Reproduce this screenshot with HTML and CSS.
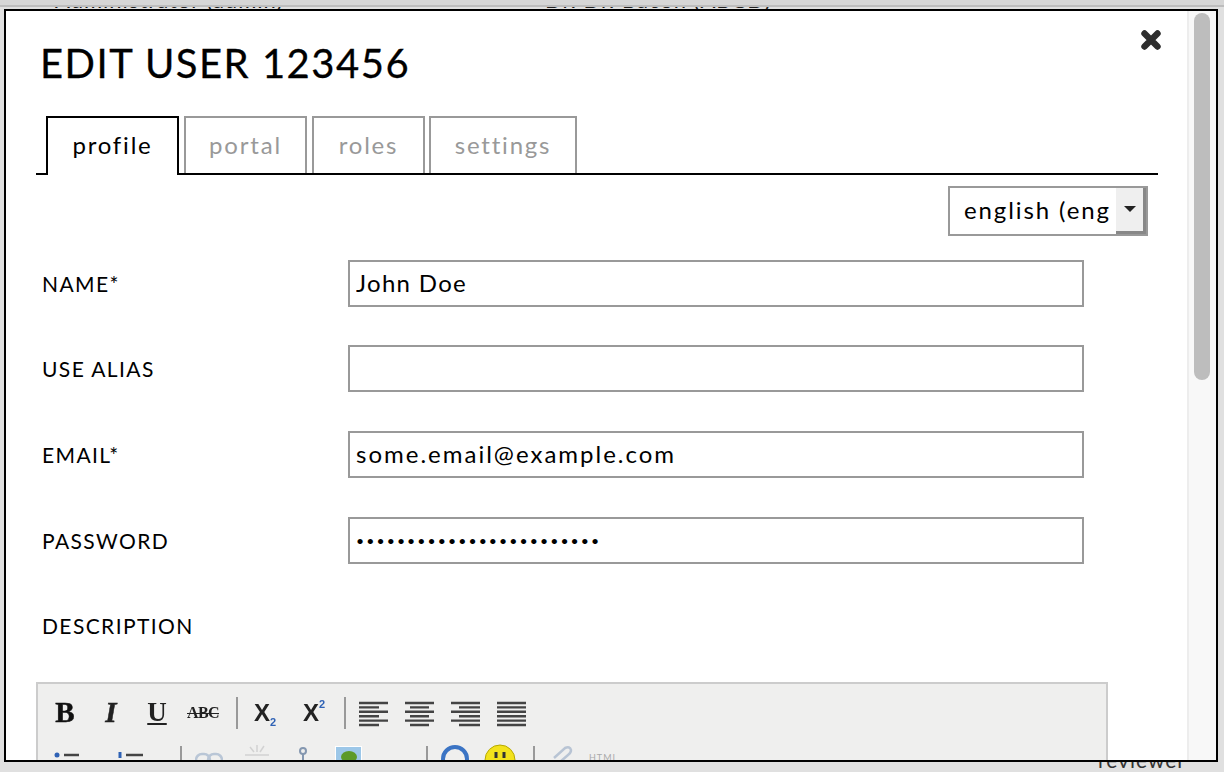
FILE: index.html
```html
<!DOCTYPE html>
<html lang="en">
<head>
<meta charset="utf-8">
<title>Edit user</title>
<link rel="stylesheet" href="styles.css">
</head>
<body>
<div class="backdrop">
  <div class="bg-strip"></div>
  <div class="bg-top"><span class="bg-a">Administrator (admin)</span><span class="bg-b">Dr. Dr. Bacon (ABCD)</span></div>
  <div class="bg-reviewer">reviewer</div>
</div>
<div class="modal">
  <main class="pane">
    <svg class="close" viewBox="0 0 20 20" width="20" height="20"><path d="M3.5 3.5 16.5 16.5M16.5 3.5 3.5 16.5" fill="none" stroke="#2e2e2e" stroke-width="6.4" stroke-linecap="round"/></svg>
    <h1 class="title">EDIT USER 123456</h1>
    <nav class="tabs">
      <a class="tab tab-active">profile</a>
      <a class="tab t-portal">portal</a>
      <a class="tab t-roles">roles</a>
      <a class="tab t-settings">settings</a>
    </nav>
    <div class="lang-row">
      <div class="lang"><span class="lang-text">english (eng</span><span class="lang-btn"><i class="arrow"></i></span></div>
    </div>
    <form class="form">
      <label class="lbl">NAME*</label><input class="inp inp-name" type="text" value="John Doe">
      <label class="lbl">USE ALIAS</label><input class="inp" type="text" value="">
      <label class="lbl">EMAIL*</label><input class="inp" type="text" value="some.email@example.com">
      <label class="lbl">PASSWORD</label><input class="inp inp-pw" type="password" value="xxxxxxxxxxxxxxxxxxxxxxxx">
      <label class="lbl lbl-desc">DESCRIPTION</label>
    </form>
    <div class="editor">
      <div class="tb-row">
        <span class="btn ic-b">B</span>
        <span class="btn ic-i">I</span>
        <span class="btn ic-u">U</span>
        <span class="btn ic-s">ABC</span>
        <span class="sep s1"></span>
        <span class="btn ic-x"><span>X<sub class="blue blue-sub">2</sub></span></span>
        <span class="btn ic-x ic-sup"><span>X<sup class="blue blue-sup">2</sup></span></span>
        <span class="sep s2"></span>
        <span class="btn"><svg class="al" width="30" height="24" viewBox="0 0 30 24"><path d="M1 2h29M1 6.4h20M1 10.8h29M1 15.2h20M1 19.6h29M1 24h20"/></svg></span>
        <span class="btn"><svg class="al" width="30" height="24" viewBox="0 0 30 24"><path d="M1 2h29M6 6.4h19M1 10.8h29M6 15.2h19M1 19.6h29M6 24h19"/></svg></span>
        <span class="btn"><svg class="al" width="30" height="24" viewBox="0 0 30 24"><path d="M1 2h29M9 6.4h21M1 10.8h29M9 15.2h21M1 19.6h29M9 24h21"/></svg></span>
        <span class="btn"><svg class="al" width="30" height="24" viewBox="0 0 30 24"><path d="M1 2h29M1 6.4h29M1 10.8h29M1 15.2h29M1 19.6h29M1 24h29"/></svg></span>
      </div>
      <div class="tb-row tb-row2">
        <svg class="i2 m1" width="26" height="20" viewBox="0 0 26 20"><circle cx="3" cy="3" r="2.5" fill="#2f62b5"/><path d="M10 3h15" stroke="#444" stroke-width="2.5"/></svg>
        <svg class="i2 m2" width="28" height="20" viewBox="0 0 28 20"><path d="M4 0v6" stroke="#2f62b5" stroke-width="3"/><path d="M10 3h17" stroke="#444" stroke-width="2.5"/></svg>
        <span class="sep2 s3"></span>
        <svg class="i2 m3" width="28" height="20" viewBox="0 0 28 20"><rect x="1" y="4" width="14" height="12" rx="6" fill="none" stroke="#b9c6d6" stroke-width="2.5"/><rect x="13" y="4" width="14" height="12" rx="6" fill="none" stroke="#b9c6d6" stroke-width="2.5"/></svg>
        <svg class="i2 m4" width="26" height="20" viewBox="0 0 26 20"><path d="M13 0v7M6 2l4 5M20 1l-4 6M1 10h24M4 16h18" stroke="#d2d2d2" stroke-width="1.5"/></svg>
        <svg class="i2 m5" width="14" height="20" viewBox="0 0 14 20"><circle cx="7" cy="5" r="3" fill="none" stroke="#8497b0" stroke-width="2"/><path d="M7 8v10" stroke="#8497b0" stroke-width="2"/></svg>
        <svg class="i2 m6" width="27" height="20" viewBox="0 0 27 20"><rect width="27" height="20" fill="#fff"/><rect x="1" y="1" width="25" height="18" fill="#9cc7e8"/><ellipse cx="14" cy="11" rx="8" ry="6" fill="#5c9a28"/></svg>
        <span class="sep2 s4"></span>
        <svg class="i2 m7" width="30" height="20" viewBox="0 0 30 20"><circle cx="15" cy="15" r="12" fill="none" stroke="#3b74c4" stroke-width="4"/></svg>
        <svg class="i2 m8" width="32" height="20" viewBox="0 0 32 20"><circle cx="16" cy="16" r="15" fill="#f3e21c" stroke="#b5a800"/><path d="M12 8v6M20 8v6" stroke="#333" stroke-width="3"/></svg>
        <span class="sep2 s5"></span>
        <svg class="i2 m9" width="22" height="20" viewBox="0 0 22 20"><path d="M3 14 14 4q5-2 6 2 0 3-3 5L9 18" fill="none" stroke="#b8c4d4" stroke-width="2.5"/></svg>
        <span class="html-mini">HTML</span>
      </div>
    </div>
  </main>
  <aside class="scroll"><div class="thumb"></div></aside>
</div>
</body>
</html>
```
FILE: styles.css
```css
* { box-sizing: border-box; }
html, body { margin: 0; height: 100%; }
body {
  overflow: hidden;
  background: #e0e0e0;
  font-family: Lato, "Open Sans", sans-serif;
  color: #000;
}
.backdrop { height: 772px; }
.bg-strip {
  height: 7px;
  background: #d6d6d6;
  border-bottom: 2px solid #bdbdbd;
}
.bg-top {
  height: 10px;
  overflow: hidden;
  font-size: 22px;
  letter-spacing: 1px;
  line-height: 1;
  display: flex;
  color: #222;
}
.bg-a, .bg-b { display: block; margin-top: -18px; white-space: nowrap; }
.bg-a { margin-left: 55px; width: 490px; }
.bg-reviewer {
  position: absolute;
  left: 1098px;
  top: 747px;
  font-size: 21px;
  letter-spacing: 1px;
  color: #333;
}
.modal {
  position: absolute;
  left: 4px;
  top: 9px;
  width: 1214px;
  height: 753px;
  border: 2px solid #000;
  background: #fff;
  display: flex;
}
.pane {
  flex: 1;
  position: relative;
  overflow: hidden;
  padding: 0 29px 0 30px;
}
.close { position: absolute; right: 26px; top: 19px; }
.title {
  margin: 0;
  height: 105px;
  padding: 29px 0 0 4px;
  font-size: 40px;
  line-height: 46px;
  font-weight: 400;
  letter-spacing: 1.5px;
  -webkit-text-stroke: .3px #000;
  white-space: nowrap;
}
.tabs {
  display: flex;
  height: 59px;
  padding-left: 10px;
  border-bottom: 2px solid #000;
}
.tab {
  display: block;
  height: 57px;
  margin-right: 5px;
  border: 2px solid #999;
  border-bottom: 0;
  color: #999;
  font-size: 24px;
  letter-spacing: 1.8px;
  line-height: 53px;
  text-align: center;
}
.tab-active {
  width: 133px;
  height: 59px;
  border-color: #000;
  border-bottom: 0;
  background: #fff;
  color: #000;
  margin-right: 5px;
  position: relative;
  z-index: 1;
}
.t-portal { width: 123px; }
.t-roles { width: 113px; margin-right: 4px; }
.t-settings { width: 148px; }
.lang-row {
  display: flex;
  justify-content: flex-end;
  padding: 11px 10px 0 0;
}
.lang {
  width: 200px;
  height: 50px;
  border: 2px solid #999;
  display: flex;
  overflow: hidden;
}
.lang-text {
  flex: 1;
  padding-left: 14px;
  font-size: 24px;
  letter-spacing: 1.9px;
  line-height: 44px;
  white-space: nowrap;
  overflow: hidden;
}
.lang-btn {
  width: 30px;
  background: #efefef;
  border-right: 3px solid #888;
  border-bottom: 3px solid #888;
  display: flex;
  justify-content: center;
  padding-top: 18px;
}
.arrow {
  width: 0;
  height: 0;
  border: 6px solid transparent;
  border-top: 6px solid #222;
  border-bottom: 0;
}
.form {
  display: grid;
  grid-template-columns: 306px 736px;
  grid-auto-rows: 47px;
  row-gap: 38.67px;
  align-items: center;
  margin-top: 23.6px;
  padding-left: 6px;
}
.lbl {
  font-size: 21px;
  letter-spacing: 1.4px;
  grid-column: 1;
  white-space: nowrap;
}
.inp {
  grid-column: 2;
  width: 736px;
  height: 47px;
  border: 2px solid #999;
  border-radius: 0;
  outline: 0;
  padding: 0 6px 2px;
  background: #fff;
  font: 400 24px Lato, "Open Sans", sans-serif;
  letter-spacing: 2px;
  color: #000;
}
.inp-name { letter-spacing: 1.3px; }
.inp-pw { font-size: 14px; letter-spacing: 2.1px; padding-bottom: 0; }
.editor {
  margin-top: 32.7px;
  width: 1072px;
  height: 120px;
  background: #efefee;
  border: 2px solid #ccc;
  padding: 0 0 0 4px;
}
.tb-row {
  display: flex;
  align-items: center;
  height: 58px;
}
.tb-row2 { align-items: flex-start; height: 40px; padding-top: 2px; }
.btn {
  width: 46px;
  height: 30px;
  display: flex;
  align-items: center;
  justify-content: center;
  color: #222;
  font-family: "Liberation Serif", serif;
  line-height: 1;
  filter: blur(.35px);
}
.ic-b { font-size: 29px; font-weight: 700; color: #111; -webkit-text-stroke: .5px #111; }
.ic-i { font-size: 29px; font-weight: 700; font-style: italic; -webkit-text-stroke: .5px #222; }
.ic-u { font-size: 27px; font-weight: 700; text-decoration: underline; }
.ic-s { font-size: 16px; font-weight: 700; text-decoration: line-through; letter-spacing: -.6px; }
.ic-x { font: 700 24px "Liberation Sans", sans-serif; color: #222; }
.ic-sup { margin-left: 3px; }
.blue { color: #2f62b5; font-size: 11px; line-height: 0; }
.blue-sub { vertical-align: -5px; }
.blue-sup { vertical-align: 13px; }
.sep { width: 2px; height: 32px; background: #999; }
.s1 { margin: 0 4px 0 10px; }
.s2 { margin: 0 4px 0 7px; }
.al { fill: none; stroke: #444; stroke-width: 2.4; overflow: visible; }
.i2 { flex: none; display: block; filter: blur(.35px); }
.sep2 { flex: none; width: 2px; height: 20px; background: #999; margin-top: 2px; }
.m1 { margin: 8px 0 0 12px; }
.m2 { margin: 8px 0 0 36px; }
.s3 { margin-left: 36px; }
.m3 { margin: 6px 0 0 13px; }
.m4 { margin: 1px 0 0 21px; }
.m5 { margin: 2px 0 0 26px; }
.m6 { margin: 2px 0 0 25px; }
.s4 { margin-left: 64px; }
.m7 { margin: 0 0 0 12px; }
.m8 { margin: 0 0 0 14px; }
.s5 { margin-left: 17px; }
.m9 { margin: 0 0 0 16px; }
.html-mini { margin: 8px 0 0 16px; font-size: 9px; color: #aaa; letter-spacing: 1px; }
.scroll {
  flex: none;
  width: 29px;
  background: #f8f8f8;
  border-left: 2px solid #ededed;
  padding: 2px 5px 0 5px;
}
.thumb {
  width: 16px;
  height: 367px;
  background: #bdbdbd;
  border-radius: 8px;
}
```
